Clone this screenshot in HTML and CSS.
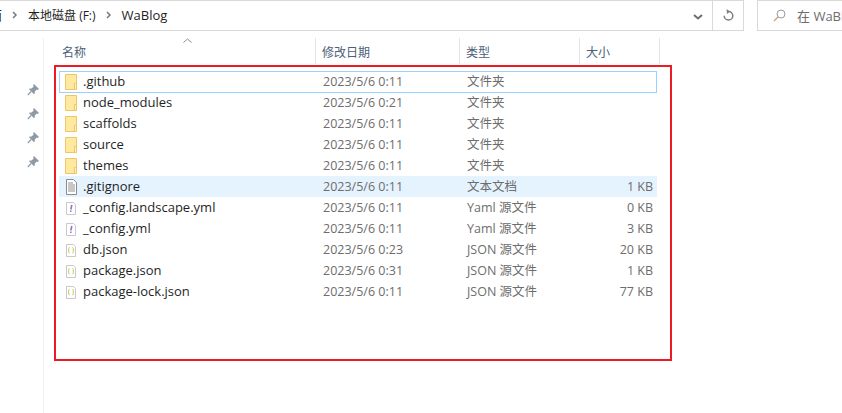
FILE: index.html
```html
<!DOCTYPE html>
<html lang="zh-CN">
<head>
  <meta charset="UTF-8" />
  <title>WaBlog</title>
  <link rel="stylesheet" href="styles.css">
</head>
<body>
  <svg class="defs" width="0" height="0">
    <symbol id="folder" viewBox="0 0 16 16">
      <path d="M.5 .5h11v15h-11z" fill="#ffe9a0" stroke="#ecc864"/>
      <path d="M9.500 9.500h2v6h-2z" fill="#fff3c4" stroke="#ecc864"/>
    </symbol>
    <symbol id="text" viewBox="0 0 16 16">
      <path d="M1.500 .5h7l3 3v12h-10z" fill="#fff" stroke="#8a8a8a"/>
      <path d="M3 4h5M3 6h7M3 8h7M3 10h7M3 12h7" stroke="#8f8f8f"/>
    </symbol>
    <symbol id="yaml" viewBox="0 0 16 16">
      <path d="M1.500 2.500h7l2 2v10h-9z" fill="#fff" stroke="#c9c9c9"/>
      <path d="M6.800 5 5.800 9.500" stroke="#9a6fd0" stroke-width="1.600"/>
      <path d="M5 10.500h1.500V12H5z" fill="#9a6fd0"/>
    </symbol>
    <symbol id="json" viewBox="0 0 16 16">
      <path d="M1.500 2.500h7l2 2v10h-9z" fill="#fff" stroke="#c9c9c9"/>
      <path d="M4.500 5.500c-.8 0-.8.5-.8 1.200v3c0 1 0 1.300.8 1.300M7.500 5.500c.8 0 .8.5.8 1.200v3c0 1 0 1.300-.8 1.300" fill="none" stroke="#c4c45a"/>
    </symbol>
    <symbol id="pin" viewBox="0 0 12 12">
      <path d="M7 0 12 5 10.800 6 9.800 5.600 7.800 7.600 7.800 9.600 6.800 10 2.200 5.400 2.600 4.400 4.600 4.400 6.600 2.400 6.200 1.200z" fill="#8d9aa5"/>
      <path d="M4 7.500.8 11.200" stroke="#8d9aa5" stroke-width="1.200"/>
    </symbol>
  </svg>

  <header class="topbar">
    <div class="address">
      <div class="crumbs">
        <span class="crumb-cut">面</span>
        <svg class="chev" viewBox="0 0 6 8"><path d="M1 1l3 3-3 3" fill="none" stroke="#7a7a7a" stroke-width="1.500"/></svg>
        <span class="crumb-drive">本地磁盘 (F:)</span>
        <svg class="chev" viewBox="0 0 6 8"><path d="M1 1l3 3-3 3" fill="none" stroke="#7a7a7a" stroke-width="1.500"/></svg>
        <span>WaBlog</span>
      </div>
      <div class="addr-drop">
        <svg width="10" height="6" viewBox="0 0 10 6"><path d="M1 1l4 3.500L9 1" fill="none" stroke="#6d6d6d" stroke-width="2"/></svg>
      </div>
      <div class="addr-refresh">
        <svg width="12" height="13" viewBox="0 0 12 13"><path d="M6.500 2.500a4.300 4.300 0 1 1-4.300 4.300" fill="none" stroke="#7d7d7d" stroke-width="1.500"/><path d="M4.500 0l3.500 2.500L5 5z" fill="#7d7d7d"/></svg>
      </div>
    </div>
    <div class="search">
      <svg width="13" height="13" viewBox="0 0 13 13"><circle cx="8" cy="5" r="4" fill="none" stroke="#9a9a9a"/><path d="M5 8 1 12" stroke="#c9a27f" stroke-width="1.200"/></svg>
      <span>在 WaBlog 中搜索</span>
    </div>
  </header>

  <div class="explorer">
    <aside class="quick">
      <svg class="pin"><use href="#pin"/></svg>
      <svg class="pin"><use href="#pin"/></svg>
      <svg class="pin"><use href="#pin"/></svg>
      <svg class="pin"><use href="#pin"/></svg>
    </aside>

    <main class="files">
      <div class="columns">
        <div class="col col-name">名称
          <svg class="sort" width="9" height="5" viewBox="0 0 9 5"><path d="M.5 4.500l4-3.500 4 3.500" fill="none" stroke="#8a8a8a"/></svg>
        </div>
        <div class="col">修改日期</div>
        <div class="col">类型</div>
        <div class="col">大小</div>
      </div>

      <div class="rows">
        <div class="row focus"><svg class="ico"><use href="#folder"/></svg><span class="name">.github</span><span>2023/5/6 0:11</span><span>文件夹</span><span class="size"></span></div>
        <div class="row"><svg class="ico"><use href="#folder"/></svg><span class="name">node_modules</span><span>2023/5/6 0:21</span><span>文件夹</span><span class="size"></span></div>
        <div class="row"><svg class="ico"><use href="#folder"/></svg><span class="name">scaffolds</span><span>2023/5/6 0:11</span><span>文件夹</span><span class="size"></span></div>
        <div class="row"><svg class="ico"><use href="#folder"/></svg><span class="name">source</span><span>2023/5/6 0:11</span><span>文件夹</span><span class="size"></span></div>
        <div class="row"><svg class="ico"><use href="#folder"/></svg><span class="name">themes</span><span>2023/5/6 0:11</span><span>文件夹</span><span class="size"></span></div>
        <div class="row hover"><svg class="ico"><use href="#text"/></svg><span class="name">.gitignore</span><span>2023/5/6 0:11</span><span>文本文档</span><span class="size">1 KB</span></div>
        <div class="row"><svg class="ico"><use href="#yaml"/></svg><span class="name">_config.landscape.yml</span><span>2023/5/6 0:11</span><span>Yaml 源文件</span><span class="size">0 KB</span></div>
        <div class="row"><svg class="ico"><use href="#yaml"/></svg><span class="name">_config.yml</span><span>2023/5/6 0:11</span><span>Yaml 源文件</span><span class="size">3 KB</span></div>
        <div class="row"><svg class="ico"><use href="#json"/></svg><span class="name">db.json</span><span>2023/5/6 0:23</span><span>JSON 源文件</span><span class="size">20 KB</span></div>
        <div class="row"><svg class="ico"><use href="#json"/></svg><span class="name">package.json</span><span>2023/5/6 0:31</span><span>JSON 源文件</span><span class="size">1 KB</span></div>
        <div class="row"><svg class="ico"><use href="#json"/></svg><span class="name">package-lock.json</span><span>2023/5/6 0:11</span><span>JSON 源文件</span><span class="size">77 KB</span></div>
      </div>

      <!-- annotation drawn over the list -->
      <div class="redbox"></div>
    </main>
  </div>
</body>
</html>
```

FILE: styles.css
```css
* { margin: 0; padding: 0; box-sizing: border-box; }
html, body {
  width: 842px;
  height: 413px;
  overflow: hidden;
  background-color: #fff;
  font-family: 'Open Sans', 'Noto Sans CJK SC', sans-serif;
  font-size: 12px;
  color: #6d6d6d;
}

.defs { position: absolute; }

/* Address bar */
.topbar {
  height: 38px;
  display: flex;
  gap: 13px;
  align-items: flex-start;
}

.address {
  width: 744px;
  height: 31px;
  display: flex;
  border: 1px solid #d9d9d9;
  border-left: none;
}

.crumbs {
  flex: 1;
  display: flex;
  align-items: center;
  gap: 10px;
  margin-left: -2px;
  padding-bottom: 2px;
  font-size: 13px;
  color: #1f1f1f;
}

.crumb-cut { margin-left: -9px; }
.crumb-drive { font-size: 12px; }

.chev { width: 6px; height: 8px; }

.addr-drop {
  width: 28px;
  display: flex;
  align-items: center;
  padding: 2px 0 0 9px;
}

.addr-refresh {
  width: 31px;
  display: flex;
  align-items: center;
  justify-content: center;
  border-left: 1px solid #d9d9d9;
}

.search {
  flex: 1;
  height: 31px;
  display: flex;
  align-items: center;
  gap: 11px;
  padding-left: 15px;
  border: 1px solid #d9d9d9;
  border-right: none;
  white-space: nowrap;
  overflow: hidden;
  font-size: 13px;
  padding-bottom: 1px;
  color: #6d6d6d;
}

.search svg { flex: none; }

/* Explorer body */
.explorer {
  display: flex;
  height: 375px;
}

.quick {
  width: 44px;
  border-right: 1px solid #f0f0f0;
  display: flex;
  flex-direction: column;
  align-items: flex-end;
  gap: 12px;
  padding: 46px 4px 0 0;
}

.pin { width: 12px; height: 12px; }

.files {
  flex: 1;
  position: relative;
}

.columns {
  display: grid;
  grid-template-columns: 272px 144px 120px 80px;
  height: 26px;
}

.col {
  display: flex;
  align-items: center;
  padding: 2px 0 0 6px;
  border-right: 1px solid #e5e5e5;
  color: #4c607a;
}

.col-name {
  position: relative;
  padding-left: 18px;
}

.sort {
  position: absolute;
  top: 0;
  left: 139px;
}

.rows {
  margin: 7px 0 0 15px;
  width: 598px;
}

.row {
  display: grid;
  grid-template-columns: 18px 240px 144px 120px 66px;
  grid-template-rows: 19px;
  align-items: center;
  height: 21px;
  padding-left: 5px;
  border: 1px solid transparent;
  font-size: 12.5px;
  line-height: 17px;
}

.row.focus {
  height: 22px;
  margin-bottom: -1px;
  border-color: #99d1ff;
}

.row.hover { background-color: #e5f3ff; }

.ico { width: 16px; height: 16px; }

.name {
  color: #1f1f1f;
  font-size: 13px;
}

.size { text-align: right; }

.redbox {
  position: absolute;
  left: 10px;
  top: 27px;
  width: 618px;
  height: 296px;
  border: 2px solid #ed1c24;
}
```
